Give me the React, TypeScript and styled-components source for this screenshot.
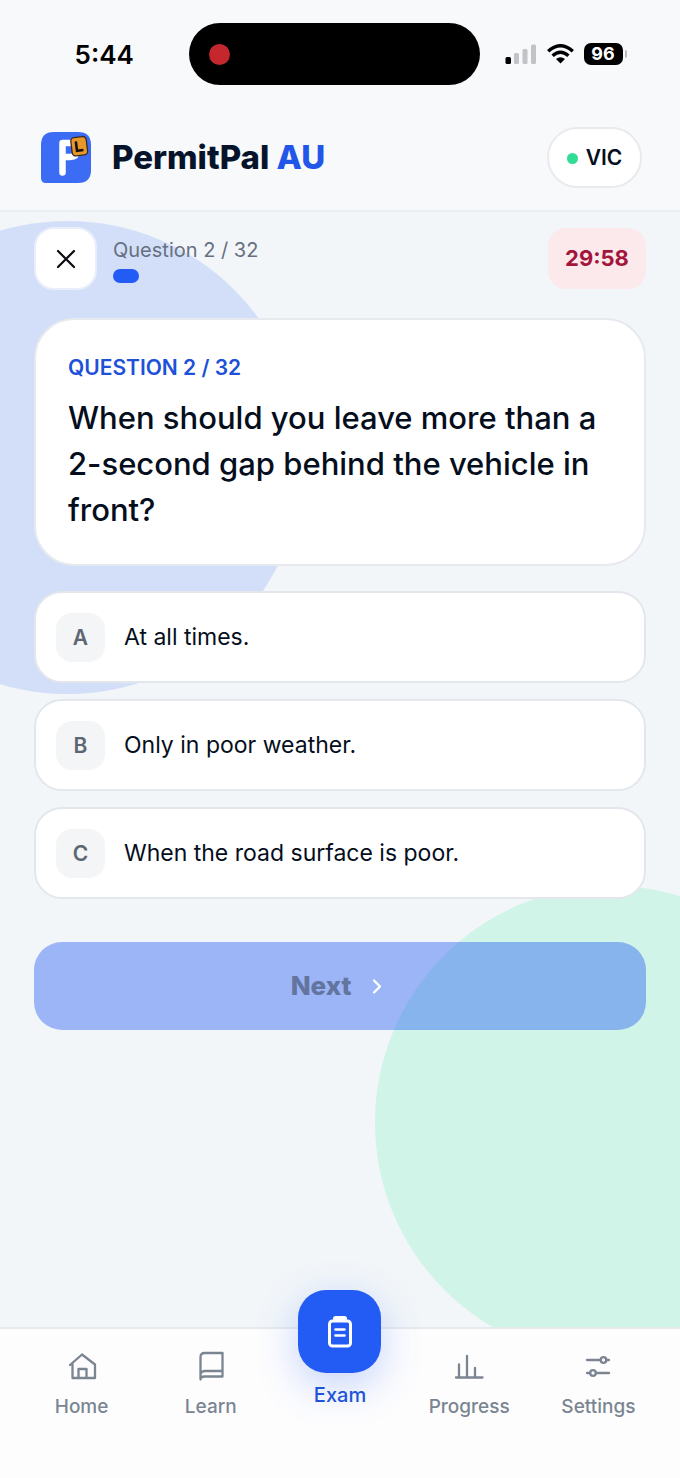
import React from "react";
import styled, { createGlobalStyle } from "styled-components";

const GlobalStyle = createGlobalStyle`
  *, *::before, *::after { box-sizing: border-box; }
  body { margin: 0; background: #f2f6f9; }
  body, button { font-family: Inter, "Liberation Sans", sans-serif; }
  button { margin: 0; padding: 0; border: 0; background: none; color: inherit; }
  h1, h2, p, ol { margin: 0; padding: 0; }
  svg { display: block; flex: none; }
`;

const Screen = styled.div`
  min-height: 100vh;
  display: flex;
  flex-direction: column;
  background: #f2f6f9;
  color: #050e1c;
`;

const StatusBar = styled.div`
  display: grid;
  grid-template-columns: 1fr 291px 1fr;
  align-items: center;
  height: 108px;
  padding-right: 12px;
  background: #f7f9fb;
`;

const Clock = styled.time`
  padding: 2px 0 0 20px;
  text-align: center;
  font-size: 26px;
  line-height: 32px;
  font-weight: 600;
  color: #000;
`;

const Island = styled.div`
  display: flex;
  align-items: center;
  height: 62px;
  padding-left: 20px;
  border-radius: 31px;
  background: #000;
`;

const RecordDot = styled.span`
  width: 21px;
  height: 21px;
  border-radius: 50%;
  background: #c4272d;
`;

const Signals = styled.div`
  display: flex;
  align-items: center;
  gap: 10px;
  padding-left: 25px;
`;

const Battery = styled.div`
  display: flex;
  align-items: center;
  gap: 2px;
`;

const BatteryBody = styled.span`
  width: 39px;
  height: 22px;
  border-radius: 7px;
  background: #000;
  color: #fff;
  font-size: 18px;
  line-height: 22px;
  font-weight: 700;
  text-align: center;
`;

const BatteryTip = styled.span`
  width: 2px;
  height: 8px;
  border-radius: 0 2px 2px 0;
  background: #b9babd;
`;

const Header = styled.header`
  display: flex;
  align-items: center;
  justify-content: space-between;
  height: 104px;
  padding: 0 38px 4px 40px;
  border-bottom: 2px solid #e9eef2;
  background: #f7f9fb;
`;

const Brand = styled.div`
  display: flex;
  align-items: center;
  gap: 20px;
`;

const BrandName = styled.h1`
  font-size: 33px;
  line-height: 40px;
  font-weight: 800;
  color: #06142b;
`;

const Accent = styled.span`
  color: #2156e8;
`;

const StateButton = styled.button`
  display: flex;
  align-items: center;
  justify-content: center;
  gap: 8px;
  width: 95px;
  height: 61px;
  padding-top: 2px;
  border: 2px solid #e8eaed;
  border-radius: 31px;
  background: #fff;
  font-size: 21px;
  line-height: 28px;
  font-weight: 600;
`;

const StateDot = styled.span`
  width: 11px;
  height: 11px;
  border-radius: 50%;
  background: #31dc95;
`;

const Main = styled.main`
  position: relative;
  flex: 1;
  overflow: hidden;
  padding: 15px 34px 48px;
`;

const Blob = styled.div<{ $tone: "blue" | "green" }>`
  position: absolute;
  width: 473px;
  height: 473px;
  border-radius: 50%;
  ${({ $tone }) =>
    $tone === "blue"
      ? "top: 9px; left: -169px; background: #d3dff9;"
      : "bottom: -32px; right: -168px; background: #d0f4e8;"}
`;

const Content = styled.div`
  position: relative;
  display: flex;
  flex-direction: column;
`;

const ExamBar = styled.div`
  display: flex;
  align-items: center;
  justify-content: space-between;
  margin-bottom: 28px;
`;

const ExamProgress = styled.div`
  display: flex;
  align-items: center;
  gap: 16px;
`;

const CloseButton = styled.button`
  display: grid;
  place-items: center;
  width: 63px;
  height: 63px;
  border: 2px solid #e9eefa;
  border-radius: 20px;
  background: #fff;
`;

const Counter = styled.div`
  display: flex;
  flex-direction: column;
  gap: 6px;
  padding-top: 2px;
`;

const CounterText = styled.p`
  font-size: 20px;
  line-height: 26px;
  color: #667080;
`;

const ProgressFill = styled.span`
  width: 26px;
  height: 14px;
  border-radius: 7px;
  background: #235bf5;
`;

const Timer = styled.time`
  width: 98px;
  height: 61px;
  border-radius: 18px;
  background: #fbe9ec;
  color: #a3153b;
  font-size: 22px;
  line-height: 61px;
  font-weight: 700;
  text-align: center;
`;

const QuestionCard = styled.section`
  padding: 34px 32px 31px;
  border: 2px solid #e6e9ee;
  border-radius: 40px;
  background: #fff;
`;

const QuestionLabel = styled.p`
  font-size: 21px;
  line-height: 28px;
  font-weight: 600;
  color: #1c51d8;
`;

const QuestionTitle = styled.h2`
  margin-top: 13px;
  font-size: 31px;
  line-height: 46px;
  font-weight: 500;
`;

const Options = styled.ol`
  display: grid;
  gap: 16px;
  margin: 25px 0 43px;
  list-style: none;
`;

const OptionButton = styled.button`
  display: flex;
  align-items: center;
  gap: 19px;
  width: 100%;
  height: 92px;
  padding: 0 20px;
  border: 2px solid #e3e7ec;
  border-radius: 28px;
  background: #fff;
  font-size: 23px;
  line-height: 30px;
  text-align: left;
`;

const OptionLetter = styled.span`
  width: 49px;
  height: 49px;
  border-radius: 16px;
  background: #f4f5f7;
  color: #5d6673;
  font-size: 21px;
  line-height: 49px;
  font-weight: 600;
  text-align: center;
`;

const NextButton = styled.button`
  display: flex;
  align-items: center;
  justify-content: center;
  gap: 14px;
  height: 88px;
  border-radius: 28px;
  background: rgba(35, 91, 245, 0.42);
  color: #63749f;
  font-size: 26px;
  line-height: 34px;
  font-weight: 800;
`;

const Nav = styled.nav`
  position: relative;
  display: grid;
  grid-template-columns: repeat(5, 1fr);
  height: 151px;
  padding: 0 17px;
  border-top: 2px solid #e6eaee;
  background: #fdfdfe;
`;

const NavLink = styled.a<{ $active?: boolean }>`
  display: flex;
  flex-direction: column;
  align-items: center;
  gap: ${({ $active }) => ($active ? 9 : 13)}px;
  margin-top: ${({ $active }) => ($active ? -39 : 22)}px;
  font-size: ${({ $active }) => ($active ? 20 : 19)}px;
  line-height: 26px;
  font-weight: 500;
  text-decoration: none;
  color: ${({ $active }) => ($active ? "#1f54d8" : "#7b8592")};
`;

const ActiveTile = styled.span`
  display: grid;
  place-items: center;
  width: 83px;
  height: 83px;
  border-radius: 28px;
  background: #235bf5;
  box-shadow: 0 12px 40px rgba(35, 91, 245, 0.26);
`;

const Logo = () => (
  <svg width="52" height="51" viewBox="0 0 52 51" aria-hidden="true">
    <path d="M14 0H38Q51 0 51 13V38Q51 51 38 51H6Q1 51 1 46V13Q1 0 14 0Z" fill="#3c6cf4" />
    <path d="M22.500 40.500V11H31Q37 11 37 18Q37 25 30 25H23.500" fill="none" stroke="#fff" strokeWidth="6.500" strokeLinecap="round" strokeLinejoin="round" />
    <g transform="rotate(-7 39 14.500)">
      <rect x="31.500" y="5" width="15.500" height="18.500" rx="3.500" fill="#e8982b" stroke="#3a2b25" strokeWidth="1.300" />
      <path d="M36.500 9V18.500H43" fill="none" stroke="#17120f" strokeWidth="2.600" />
    </g>
  </svg>
);

const CellularIcon = () => (
  <svg width="32" height="20" viewBox="0 0 32 20" aria-label="Cellular signal" role="img">
    <rect x="0.500" y="13" width="5.500" height="7" rx="1.500" fill="#000" />
    <g fill="#c2c3c6">
      <rect x="9" y="9" width="5" height="11" rx="1.500" />
      <rect x="17.500" y="5" width="5" height="15" rx="1.500" />
      <rect x="26" y="0.500" width="5" height="19.500" rx="1.500" />
    </g>
  </svg>
);

const WifiIcon = () => (
  <svg width="27" height="20" viewBox="0 0 27 20" aria-label="Wi-Fi" role="img">
    <g fill="none" stroke="#000" strokeWidth="3.500">
      <path d="M1.200 7.200Q13.500 -3.600 25.800 7.200" />
      <path d="M5.600 11.800Q13.500 4.800 21.400 11.800" />
    </g>
    <path d="M13.500 19.500L9 15Q13.500 11.500 18 15Z" fill="#000" />
  </svg>
);

const Stroke = styled.svg.attrs({
  fill: "none",
  stroke: "currentColor",
  strokeLinecap: "round",
  strokeLinejoin: "round",
  strokeWidth: 2.3,
  "aria-hidden": true,
})``;

const HomeIcon = () => (
  <Stroke width="30" height="30" viewBox="0 0 30 30">
    <path d="M3 14L15 3.500L28 13.500V27H5.500V12.500M11.500 27V18H19.500V27" />
  </Stroke>
);

const BookIcon = () => (
  <Stroke width="30" height="30" viewBox="0 0 30 30">
    <path d="M4.500 28.500V6Q4.500 2 8.500 2H26.500V25.500H8.500Q4.500 25.500 4.500 28.500M4.500 23Q5.500 20 9 20H26.500" />
  </Stroke>
);

const ChartIcon = () => (
  <Stroke width="30" height="30" viewBox="0 0 30 30">
    <path d="M2 26.500H28.500M5 26.500V13.500M13 26.500V5M21 26.500V17" />
  </Stroke>
);

const SlidersIcon = () => (
  <Stroke width="30" height="30" viewBox="0 0 30 30">
    <path d="M4 9H17.500M23.500 9H26M4 22H7M13 22H26" />
    <circle cx="20.500" cy="9" r="2.800" />
    <circle cx="10" cy="22" r="2.800" />
  </Stroke>
);

const ClipboardIcon = () => (
  <svg width="30" height="34" viewBox="0 0 30 34" fill="none" stroke="#fff" strokeWidth="3" strokeLinejoin="round" strokeLinecap="round" aria-hidden="true">
    <rect x="4.500" y="6" width="21" height="25" rx="3" />
    <path d="M10.500 3.500H19.500" strokeWidth="5" />
    <path d="M10.500 14.500H19.500M10.500 20.500H19.500" strokeWidth="2.600" />
  </svg>
);

const CloseIcon = () => (
  <svg width="20" height="20" viewBox="0 0 20 20" fill="none" stroke="#0a0d12" strokeWidth="2.200" strokeLinecap="round" aria-hidden="true">
    <path d="M2 2L18 18M18 2L2 18" />
  </svg>
);

const ChevronIcon = () => (
  <svg width="24" height="24" viewBox="0 0 24 24" fill="none" stroke="#fff" strokeWidth="2.300" strokeLinecap="round" strokeLinejoin="round" aria-hidden="true">
    <path d="M9 6.500L15 12.500L9 18.500" />
  </svg>
);

const options = [
  { letter: "A", text: "At all times." },
  { letter: "B", text: "Only in poor weather." },
  { letter: "C", text: "When the road surface is poor." },
];

const tabs = [
  { label: "Home", icon: <HomeIcon /> },
  { label: "Learn", icon: <BookIcon /> },
  { label: "Exam", icon: <ClipboardIcon />, active: true },
  { label: "Progress", icon: <ChartIcon /> },
  { label: "Settings", icon: <SlidersIcon /> },
];

export default function App() {
  return (
    <Screen>
      <GlobalStyle />
      <StatusBar>
        <Clock>5:44</Clock>
        <Island>
          <RecordDot />
        </Island>
        <Signals>
          <CellularIcon />
          <WifiIcon />
          <Battery>
            <BatteryBody>96</BatteryBody>
            <BatteryTip />
          </Battery>
        </Signals>
      </StatusBar>
      <Header>
        <Brand>
          <Logo />
          <BrandName>
            PermitPal <Accent>AU</Accent>
          </BrandName>
        </Brand>
        <StateButton type="button">
          <StateDot />
          VIC
        </StateButton>
      </Header>
      <Main>
        <Blob $tone="blue" />
        <Blob $tone="green" />
        <Content>
          <ExamBar>
            <ExamProgress>
              <CloseButton type="button" aria-label="Close exam">
                <CloseIcon />
              </CloseButton>
              <Counter>
                <CounterText>Question 2 / 32</CounterText>
                <ProgressFill />
              </Counter>
            </ExamProgress>
            <Timer>29:58</Timer>
          </ExamBar>
          <QuestionCard>
            <QuestionLabel>QUESTION 2 / 32</QuestionLabel>
            <QuestionTitle>When should you leave more than a 2-second gap behind the vehicle in front?</QuestionTitle>
          </QuestionCard>
          <Options>
            {options.map(({ letter, text }) => (
              <li key={letter}>
                <OptionButton type="button">
                  <OptionLetter>{letter}</OptionLetter>
                  {text}
                </OptionButton>
              </li>
            ))}
          </Options>
          <NextButton type="button" disabled>
            Next
            <ChevronIcon />
          </NextButton>
        </Content>
      </Main>
      <Nav aria-label="Main">
        {tabs.map(({ label, icon, active }) => (
          <NavLink key={label} href="#" $active={active} aria-current={active ? "page" : undefined}>
            {active ? <ActiveTile>{icon}</ActiveTile> : icon}
            {label}
          </NavLink>
        ))}
      </Nav>
    </Screen>
  );
}
